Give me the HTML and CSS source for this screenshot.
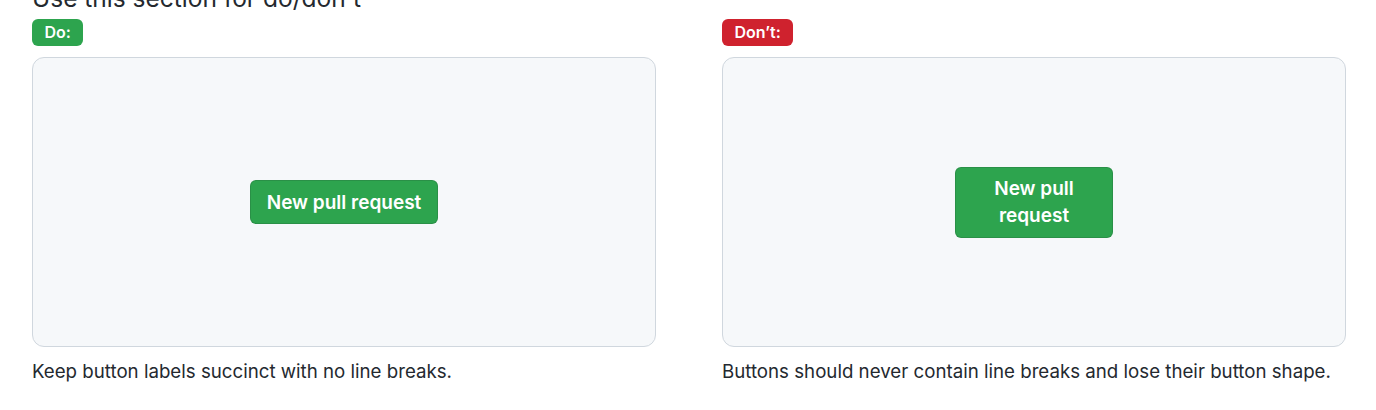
FILE: index.html
```html
<!DOCTYPE html>
<html lang="en">
<head>
	<meta charset="UTF-8">
	<title>Do / Don't</title>
	<link rel="stylesheet" href="styles.css">
</head>
<body>
	<div class="page">
		<h2 class="title">Use this section for do/don't</h2>
		<div class="pair">
			<div class="item">
				<span class="tag tag-do">Do:</span>
				<div class="stage">
					<button class="btn">New pull request</button>
				</div>
				<p class="caption">Keep button labels succinct with no line breaks.</p>
			</div>
			<div class="item">
				<span class="tag tag-dont">Don’t:</span>
				<div class="stage">
					<button class="btn btn-narrow">New pull request</button>
				</div>
				<p class="caption">Buttons should never contain line breaks and lose their button shape.</p>
			</div>
		</div>
	</div>
</body>
</html>
```

FILE: styles.css
```css
body,div,p,h2{margin: 0;padding: 0;}
body{font: 400 16px/1.5 Inter, "Noto Sans", sans-serif;color: #24292f;background: #fff;}
.page{padding: 0 30px 0 32px;}
.title{font-size: 24.5px;font-weight: 400;line-height: 34px;margin-top: -19px;}
.pair{display: grid;grid-template-columns: 624px 624px;column-gap: 66px;}
.item{display: flex;flex-direction: column;align-items: flex-start;}
.tag{display: inline-block;height: 27px;line-height: 27px;padding: 0 12.5px;border-radius: 6px;color: #fff;font-size: 16px;font-weight: 600;margin-top: 4px;}
.tag-do{background: #2da44e;}
.tag-dont{background: #cf222e;}
.stage{box-sizing: border-box;width: 624px;height: 290px;margin-top: 11px;background: #f6f8fa;border: 1px solid #d0d7de;border-radius: 12px;display: flex;align-items: center;justify-content: center;}
.btn{font: 600 19px/27px Inter, "Noto Sans", sans-serif;color: #fff;background: #2da44e;border: 1px solid rgba(27,31,36,0.15);border-radius: 6px;padding: 7.5px 16px;cursor: pointer;}
.btn-narrow{width: 158px;}
.caption{margin-top: 12px;font-size: 18.7px;line-height: 26px;}
```
